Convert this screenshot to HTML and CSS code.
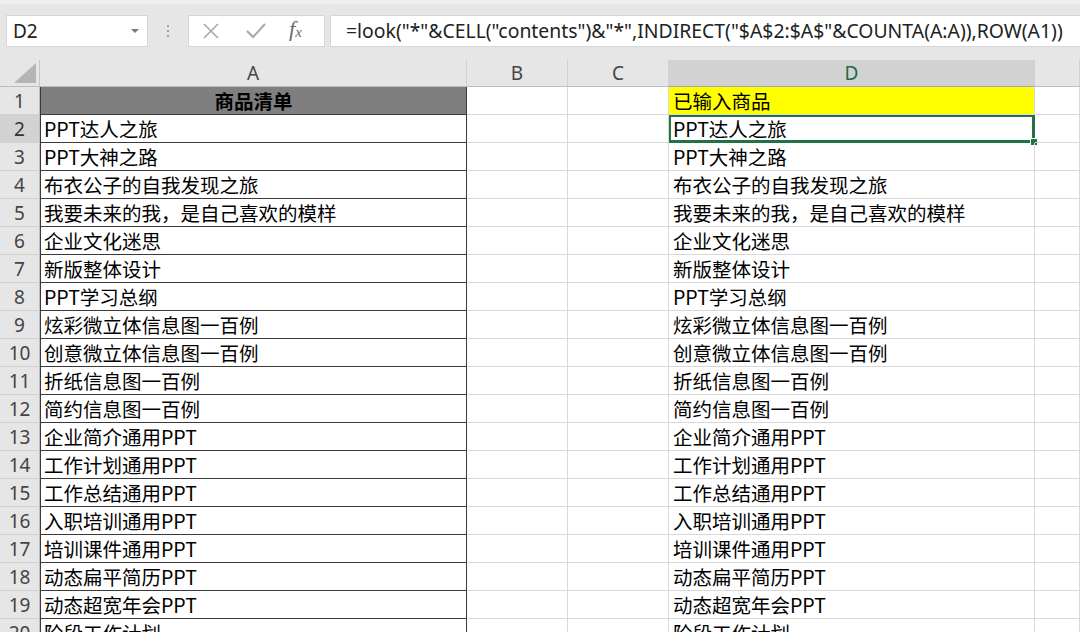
FILE: index.html
```html
<!DOCTYPE html>
<html lang="zh-CN">
<head>
<meta charset="utf-8">
<title>Excel</title>
<link rel="stylesheet" href="styles.css">
</head>
<body>
<div class="toolbar">
  <div class="namebox"><span>D2</span>
    <svg class="caret" width="8" height="5" viewBox="0 0 8 5"><path d="M0 0 L8 0 L4 4 Z" fill="#7a7a7a"/></svg>
  </div>
  <div class="dots"><i></i><i></i><i></i></div>
  <div class="fxbox">
    <svg width="20" height="20" viewBox="0 0 20 20"><path d="M3 3 L17 17 M17 3 L3 17" stroke="#a8a8a8" stroke-width="1.6" fill="none"/></svg>
    <svg width="22" height="20" viewBox="0 0 22 20"><path d="M2 10 L8 16 L20 3" stroke="#a8a8a8" stroke-width="2" fill="none"/></svg>
    <span class="fx">f<sub>x</sub></span>
  </div>
  <div class="formula">=look("*"&amp;CELL("contents")&amp;"*",INDIRECT("$A$2:$A$"&amp;COUNTA(A:A)),ROW(A1))</div>
</div>
<div class="sheet">
  <div class="hd corner"><svg width="22" height="20" viewBox="0 0 22 20"><path d="M22 0 L22 20 L0 20 Z" fill="#b5b5b5"/></svg></div>
  <div class="hd">A</div><div class="hd">B</div><div class="hd">C</div><div class="hd sel">D</div><div class="hd"></div>

  <div class="rn">1</div><div class="c a title">商品清单</div><div class="c"></div><div class="c"></div><div class="c d yellow">已输入商品</div><div class="c"></div>
  <div class="rn sel">2</div><div class="c a">PPT达人之旅</div><div class="c"></div><div class="c"></div><div class="c d active">PPT达人之旅<span class="handle"></span></div><div class="c"></div>
  <div class="rn">3</div><div class="c a">PPT大神之路</div><div class="c"></div><div class="c"></div><div class="c d">PPT大神之路</div><div class="c"></div>
  <div class="rn">4</div><div class="c a">布衣公子的自我发现之旅</div><div class="c"></div><div class="c"></div><div class="c d">布衣公子的自我发现之旅</div><div class="c"></div>
  <div class="rn">5</div><div class="c a">我要未来的我，是自己喜欢的模样</div><div class="c"></div><div class="c"></div><div class="c d">我要未来的我，是自己喜欢的模样</div><div class="c"></div>
  <div class="rn">6</div><div class="c a">企业文化迷思</div><div class="c"></div><div class="c"></div><div class="c d">企业文化迷思</div><div class="c"></div>
  <div class="rn">7</div><div class="c a">新版整体设计</div><div class="c"></div><div class="c"></div><div class="c d">新版整体设计</div><div class="c"></div>
  <div class="rn">8</div><div class="c a">PPT学习总纲</div><div class="c"></div><div class="c"></div><div class="c d">PPT学习总纲</div><div class="c"></div>
  <div class="rn">9</div><div class="c a">炫彩微立体信息图一百例</div><div class="c"></div><div class="c"></div><div class="c d">炫彩微立体信息图一百例</div><div class="c"></div>
  <div class="rn">10</div><div class="c a">创意微立体信息图一百例</div><div class="c"></div><div class="c"></div><div class="c d">创意微立体信息图一百例</div><div class="c"></div>
  <div class="rn">11</div><div class="c a">折纸信息图一百例</div><div class="c"></div><div class="c"></div><div class="c d">折纸信息图一百例</div><div class="c"></div>
  <div class="rn">12</div><div class="c a">简约信息图一百例</div><div class="c"></div><div class="c"></div><div class="c d">简约信息图一百例</div><div class="c"></div>
  <div class="rn">13</div><div class="c a">企业简介通用PPT</div><div class="c"></div><div class="c"></div><div class="c d">企业简介通用PPT</div><div class="c"></div>
  <div class="rn">14</div><div class="c a">工作计划通用PPT</div><div class="c"></div><div class="c"></div><div class="c d">工作计划通用PPT</div><div class="c"></div>
  <div class="rn">15</div><div class="c a">工作总结通用PPT</div><div class="c"></div><div class="c"></div><div class="c d">工作总结通用PPT</div><div class="c"></div>
  <div class="rn">16</div><div class="c a">入职培训通用PPT</div><div class="c"></div><div class="c"></div><div class="c d">入职培训通用PPT</div><div class="c"></div>
  <div class="rn">17</div><div class="c a">培训课件通用PPT</div><div class="c"></div><div class="c"></div><div class="c d">培训课件通用PPT</div><div class="c"></div>
  <div class="rn">18</div><div class="c a">动态扁平简历PPT</div><div class="c"></div><div class="c"></div><div class="c d">动态扁平简历PPT</div><div class="c"></div>
  <div class="rn">19</div><div class="c a">动态超宽年会PPT</div><div class="c"></div><div class="c"></div><div class="c d">动态超宽年会PPT</div><div class="c"></div>
  <div class="rn">20</div><div class="c a">阶段工作计划</div><div class="c"></div><div class="c"></div><div class="c d">阶段工作计划</div><div class="c"></div>
</div>
</body>
</html>
```

FILE: styles.css
```css
html, body {
  margin: 0;
  padding: 0;
  background: #ffffff;
  overflow: hidden;
  height: 632px;
}
body {
  font-family: "Noto Sans CJK SC", "Noto Sans", sans-serif;
  color: #000;
}
.toolbar {
  height: 60px;
  box-sizing: border-box;
  background: #e6e6e6;
  border-top: 4px solid #efefef;
  padding-top: 11px;
  display: flex;
  align-items: flex-start;
  white-space: nowrap;
}
.namebox {
  margin-left: 6px;
  width: 142px;
  height: 32px;
  box-sizing: border-box;
  background: #fff;
  border: 1px solid #d6d6d6;
  display: flex;
  align-items: center;
  justify-content: space-between;
  padding: 0 8px 0 6px;
  font-family: "Noto Sans", sans-serif;
  font-size: 19px;
  color: #222;
}
.caret { margin-top: 1px; }
.dots {
  width: 40px;
  height: 32px;
  display: flex;
  flex-direction: column;
  align-items: center;
  justify-content: center;
  gap: 3px;
}
.dots i {
  display: block;
  width: 2px;
  height: 2px;
  background: #a0a0a0;
}
.fxbox {
  width: 137px;
  height: 32px;
  box-sizing: border-box;
  background: #fff;
  border: 1px solid #d6d6d6;
  display: flex;
  align-items: center;
  padding-left: 12px;
  gap: 24px;
}
.fx {
  font-family: "Liberation Serif", serif;
  font-style: italic;
  font-size: 22px;
  color: #6a6a6a;
  margin-left: -2px;
  margin-top: -4px;
}
.fx sub {
  font-size: 15px;
  vertical-align: -1px;
}
.formula {
  margin-left: 5px;
  flex: 1;
  height: 32px;
  box-sizing: border-box;
  background: #fff;
  border: 1px solid #d6d6d6;
  border-right: none;
  padding-left: 15px;
  font-family: "Noto Sans", sans-serif;
  font-size: 19.4px;
  line-height: 29px;
  color: #222;
  overflow: hidden;
}
.sheet {
  display: grid;
  grid-template-columns: 40px 427px 101px 101px 366px 1fr;
  grid-template-rows: 27px;
  grid-auto-rows: 28px;
}
.hd {
  box-sizing: border-box;
  background: #e6e6e6;
  border-right: 1px solid #d0d0d0;
  border-bottom: 1px solid #bdbdbd;
  text-align: center;
  font-family: "Noto Sans", sans-serif;
  font-size: 19px;
  line-height: 27px;
  color: #444;
}
.hd.sel {
  background: #d2d2d2;
  color: #1f6b45;
  border-bottom-color: #a8a8a8;
}
.corner {
  display: flex;
  align-items: flex-end;
  justify-content: flex-end;
  padding: 0 3px 3px 0;
  border-right-color: #c6c6c6;
}
.rn {
  box-sizing: border-box;
  background: #e6e6e6;
  border-bottom: 1px solid #d0d0d0;
  border-right: 1px solid #bdbdbd;
  text-align: center;
  font-family: "Noto Sans", sans-serif;
  font-size: 19px;
  line-height: 28px;
  color: #444;
}
.rn.sel {
  background: #d2d2d2;
  color: #333;
}
.c {
  box-sizing: border-box;
  border-right: 1px solid #d9d9d9;
  border-bottom: 1px solid #d9d9d9;
  font-size: 19.5px;
  line-height: 27px;
  padding-left: 4px;
  white-space: nowrap;
  overflow: hidden;
  position: relative;
}
.c.a {
  border-left: 1px solid #3a3a3a;
  border-right-color: #3a3a3a;
  border-bottom-color: #3a3a3a;
  padding-left: 3px;
}
.c.title {
  background: #7f7f7f;
  text-align: center;
  font-weight: bold;
  padding-left: 0;
}
.c.yellow {
  background: #ffff00;
}
.c.active {
  overflow: visible;
  box-shadow: inset 0 0 0 2px #217346;
  border-right-color: #217346;
  border-bottom-color: #217346;
}
.handle {
  position: absolute;
  right: -4px;
  bottom: -4px;
  width: 6px;
  height: 6px;
  background: #217346;
  border: 1px solid #fff;
}
```
